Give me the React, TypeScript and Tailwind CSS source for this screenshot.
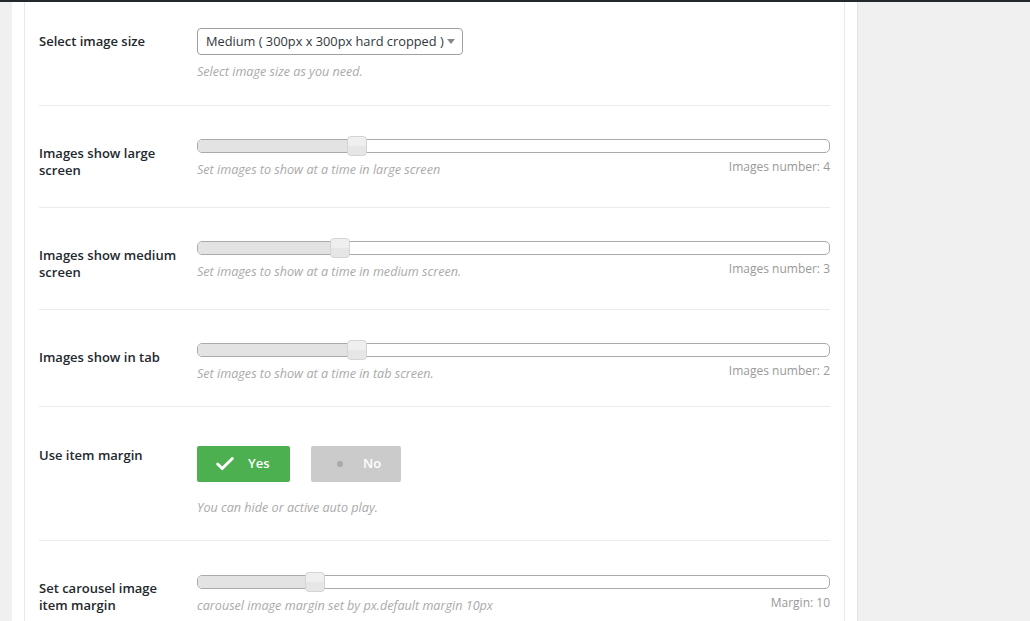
import { Check } from 'lucide-react';

type SliderProps = { pos: number; help: string; count: string };

// track is 633px wide, handle 19px, pos is handle left offset
function Slider({ pos, help, count }: SliderProps) {
  return (
    <div>
      <div className="relative h-[20px]">
        <div className="absolute left-0 right-0 top-[3px] h-[14px] rounded-[5px] border border-[#aaa] bg-white overflow-hidden">
          <div className="h-full bg-[#e3e3e3]" style={{ width: pos + 10 }} />
        </div>
        <div
          className="absolute top-0 h-[20px] w-[20px] rounded-[4px] border border-[#d3d3d3] bg-gradient-to-b from-[#efefef] from-50% to-[#e6e6e6] to-50%"
          style={{ left: pos }}
        />
      </div>
      <div className="mt-[5px] flex items-start justify-between">
        <span className="text-[12.6px] leading-[17px] italic text-[#aaa]">{help}</span>
        <span className="-mt-[3px] text-[12px] leading-[17px] text-[#999]">{count}</span>
      </div>
    </div>
  );
}

export default function App() {
  const label = 'w-[158px] shrink-0 pr-[18px] pb-[28px] text-[13px] leading-[17px] font-semibold text-[#23282d]';

  return (
    <div className="h-[621px] overflow-hidden bg-[#f0f0f0] font-['Open_Sans',sans-serif]">
      <div className="h-[2px] bg-[#23282d]" />
      <div className="flex">
        <div className="ml-[12px] w-[846px] border-r border-[#e2e2e2] bg-white px-[12px]">
          <div className="min-h-[640px] border-x border-[#e8e8e8] px-[14px]">
            {/* image size */}
            <div className="flex border-b border-[#ebebeb]">
              <div className={`${label} pt-[31px]`}>Select image size</div>
              <div className="flex-1 pt-[26px] pb-[25px]">
                <div className="flex h-[27px] w-[266px] items-center rounded-[4px] border border-[#a0a0a0] pl-[8px] text-[12.8px] text-[#32373c]">
                  <span className="whitespace-nowrap">Medium ( 300px x 300px hard cropped )</span>
                  <span className="ml-auto mr-[7px] h-0 w-0 border-x-[4px] border-t-[5px] border-x-transparent border-t-[#888]" />
                </div>
                <div className="mt-[8px] text-[12.6px] leading-[17px] italic text-[#aaa]">Select image size as you need.</div>
              </div>
            </div>

            <div className="flex border-b border-[#ebebeb]">
              <div className={`${label} pt-[39px]`}>Images show large screen</div>
              <div className="flex-1 pt-[30px] pb-[24px]">
                <Slider pos={150} help="Set images to show at a time in large screen" count="Images number: 4" />
              </div>
            </div>

            <div className="flex border-b border-[#ebebeb]">
              <div className={`${label} pt-[39px]`}>Images show medium screen</div>
              <div className="flex-1 pt-[30px] pb-[24px]">
                <Slider pos={133} help="Set images to show at a time in medium screen." count="Images number: 3" />
              </div>
            </div>

            <div className="flex border-b border-[#ebebeb]">
              <div className={`${label} pt-[39px]`}>Images show in tab</div>
              <div className="flex-1 pt-[30px] pb-[24px]">
                <Slider pos={150} help="Set images to show at a time in tab screen." count="Images number: 2" />
              </div>
            </div>

            {/* margin toggle */}
            <div className="flex border-b border-[#ebebeb]">
              <div className={`${label} pt-[40px]`}>Use item margin</div>
              <div className="flex-1 pt-[39px] pb-[24px]">
                <div className="flex gap-[21px]">
                  <button className="flex h-[36px] w-[93px] items-center rounded-[2px] bg-[#4caf50] pl-[17px] text-[13px] font-semibold text-white">
                    <Check size={22} strokeWidth={3.2} />
                    <span className="ml-[12px]">Yes</span>
                  </button>
                  <button className="flex h-[36px] w-[90px] items-center rounded-[2px] bg-[#cbcbcb] pl-[26px] text-[13px] font-semibold text-white">
                    <span className="h-[6px] w-[6px] rounded-full bg-[#aaa]" />
                    <span className="ml-[20px]">No</span>
                  </button>
                </div>
                <div className="mt-[17px] text-[12.6px] leading-[17px] italic text-[#aaa]">You can hide or active auto play.</div>
              </div>
            </div>

            <div className="flex">
              <div className={`${label} pt-[39px]`}>Set carousel image item margin</div>
              <div className="flex-1 pt-[31px] pb-[24px]">
                <Slider pos={108} help="carousel image margin set by px.default margin 10px" count="Margin: 10" />
              </div>
            </div>
          </div>
        </div>
      </div>
    </div>
  );
}
